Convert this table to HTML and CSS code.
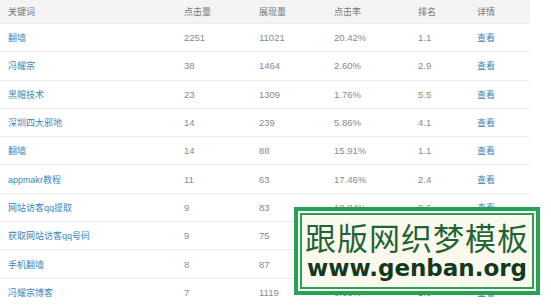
FILE: index.html
```html
<!DOCTYPE html>
<html lang="zh-CN">
<head>
    <meta charset="UTF-8">
    <title>关键词</title>
    <link rel="stylesheet" href="styles.css">
</head>
<body>
    <div class="wrap">
        <table class="kw-table">
            <colgroup>
                <col class="c-kw"><col class="c-num"><col class="c-num"><col class="c-rate"><col class="c-rank"><col class="c-more">
            </colgroup>
            <thead>
                <tr><th>关键词</th><th>点击量</th><th>展现量</th><th>点击率</th><th>排名</th><th>详情</th></tr>
            </thead>
            <tbody>
                <tr><td><a href="#">翻墙</a></td><td>2251</td><td>11021</td><td>20.42%</td><td>1.1</td><td><a href="#">查看</a></td></tr>
                <tr><td><a href="#">冯耀宗</a></td><td>38</td><td>1464</td><td>2.60%</td><td>2.9</td><td><a href="#">查看</a></td></tr>
                <tr><td><a href="#">黑帽技术</a></td><td>23</td><td>1309</td><td>1.76%</td><td>5.5</td><td><a href="#">查看</a></td></tr>
                <tr><td><a href="#">深圳四大邪地</a></td><td>14</td><td>239</td><td>5.86%</td><td>4.1</td><td><a href="#">查看</a></td></tr>
                <tr><td><a href="#">翻墙</a></td><td>14</td><td>88</td><td>15.91%</td><td>1.1</td><td><a href="#">查看</a></td></tr>
                <tr><td><a href="#">appmakr教程</a></td><td>11</td><td>63</td><td>17.46%</td><td>2.4</td><td><a href="#">查看</a></td></tr>
                <tr><td><a href="#">网站访客qq提取</a></td><td>9</td><td>83</td><td>10.84%</td><td>8.6</td><td><a href="#">查看</a></td></tr>
                <tr><td><a href="#">获取网站访客qq号码</a></td><td>9</td><td>75</td><td>12.00%</td><td>7.3</td><td><a href="#">查看</a></td></tr>
                <tr><td><a href="#">手机翻墙</a></td><td>8</td><td>87</td><td>9.20%</td><td>3.2</td><td><a href="#">查看</a></td></tr>
                <tr><td><a href="#">冯耀宗博客</a></td><td>7</td><td>1119</td><td>0.63%</td><td>1.0</td><td><a href="#">查看</a></td></tr>
            </tbody>
        </table>

        <div class="stamp">
            <div class="stamp-inner">
                <div class="stamp-cn">跟版网织梦模板</div>
                <div class="stamp-url">www.genban.org</div>
            </div>
        </div>
    </div>
</body>
</html>
```

FILE: styles.css
```css
body {
    margin: 0;
    background: #fff;
    font-family: "Liberation Sans", "Noto Sans CJK SC", sans-serif;
    overflow: hidden;
}

.wrap {
    position: relative;
    width: 551px;
    height: 305px;
}

.kw-table {
    width: 530px;
    border-collapse: collapse;
    table-layout: fixed;
    font-size: 9.5px;
    color: #8a8a8a;
}

.c-kw { width: 176px; }
.c-num { width: 75px; }
.c-rate { width: 84px; }
.c-rank { width: 59px; }
.c-more { width: 61px; }

.kw-table th,
.kw-table td {
    text-align: left;
    padding: 0 0 0 8px;
    border-bottom: 1px solid #ececec;
    white-space: nowrap;
}

.kw-table th {
    height: 23px;
    background: #f4f4f4;
    font-weight: normal;
    color: #777;
    font-size: 9px;
}

.kw-table td {
    height: 27.3px;
}

.kw-table a {
    color: #3a86bd;
    text-decoration: none;
    font-size: 9px;
}

.stamp {
    position: absolute;
    left: 294px;
    top: 207px;
    width: 246px;
    height: 88px;
    box-sizing: border-box;
    border: 4px solid #27a253;
    padding: 2px;
    background: #fff;
}

.stamp-inner {
    height: 100%;
    box-sizing: border-box;
    border: 2px solid #27a253;
    background: #fbf9ee;
    display: flex;
    flex-direction: column;
    align-items: center;
    justify-content: center;
}

.stamp-cn {
    font-family: "Noto Sans CJK SC", sans-serif;
    font-size: 31px;
    line-height: 34px;
    color: #1f6534;
    letter-spacing: 1px;
}

.stamp-url {
    font-family: "DejaVu Sans", sans-serif;
    font-weight: bold;
    font-size: 23px;
    line-height: 28px;
    color: #12381e;
}
```
